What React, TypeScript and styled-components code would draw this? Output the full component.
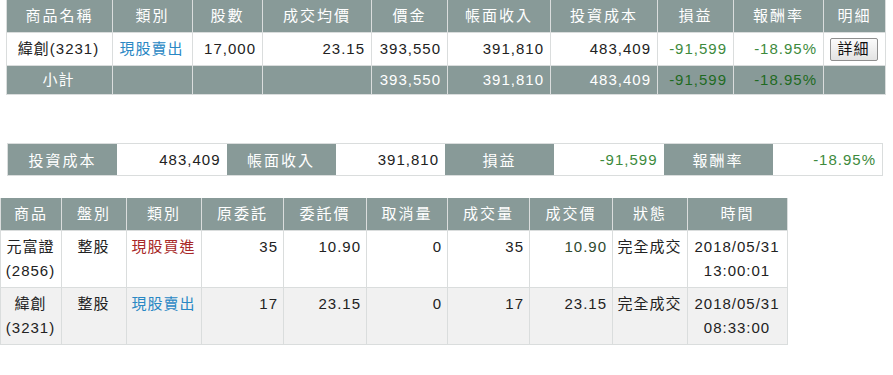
import React from "react";
import styled, { createGlobalStyle } from "styled-components";

const Global = createGlobalStyle`
  html, body { margin: 0; padding: 0; background: #ffffff; }
  body {
    font-family: "Liberation Sans", Arial, "Noto Sans CJK TC", sans-serif;
    font-size: 15px;
    color: #222;
  }
`;

const HEAD_BG = "#889a98";
const LINE = "#dadddd";

const Page = styled.div`
  display: flex;
  flex-direction: column;
  align-items: flex-start;
  width: 893px;
`;

const Table = styled.table<{ $w: number; $ml?: number; $mt?: number }>`
  border-collapse: collapse;
  table-layout: fixed;
  width: ${(p) => p.$w}px;
  margin-left: ${(p) => p.$ml ?? 0}px;
  margin-top: ${(p) => p.$mt ?? 0}px;
  letter-spacing: 1px;
`;

const HeadCell = styled.th<{ $h?: number }>`
  background: ${HEAD_BG};
  color: #fff;
  font-weight: normal;
  height: ${(p) => p.$h ?? 32}px;
  padding: 0;
  text-align: center;
  border: 1px solid ${LINE};
  border-top: none;
  line-height: 18px;
  letter-spacing: 2px;
`;

type Align = "left" | "center" | "right";

const Cell = styled.td<{ $align?: Align; $h?: number; $sub?: boolean; $color?: string }>`
  height: ${(p) => p.$h ?? 32}px;
  padding: 0 6px 0 4px;
  text-align: ${(p) => p.$align ?? "right"};
  border: 1px solid ${LINE};
  background: ${(p) => (p.$sub ? HEAD_BG : "#fff")};
  color: ${(p) => p.$color ?? (p.$sub ? "#fff" : "#222")};
  white-space: nowrap;
  line-height: 18px;
`;

const Row = styled.tr<{ $alt?: boolean }>`
  background: ${(p) => (p.$alt ? "#f1f1f1" : "#fff")};
`;

const OrderCell = styled.td<{ $align?: Align; $color?: string }>`
  height: 48px;
  padding: 4px 5px 4px 4px;
  vertical-align: top;
  text-align: ${(p) => p.$align ?? "right"};
  border: 1px solid ${LINE};
  border-top: none;
  color: ${(p) => p.$color ?? "#222"};
  line-height: 24px;
  white-space: nowrap;
`;

const DetailButton = styled.button`
  width: 48px;
  height: 23px;
  padding: 0;
  font: inherit;
  font-size: 15px;
  letter-spacing: 1px;
  color: #111;
  border: 1px solid #8f8f8f;
  border-radius: 2px;
  background: linear-gradient(#fbfbfb, #e3e3e3);
  display: block;
  margin: 0 auto;
  cursor: pointer;
`;

const Summary = styled.div`
  display: grid;
  grid-template-columns: repeat(8, 1fr);
  width: 876px;
  margin: 48px 0 0 7px;
  border: 1px solid ${LINE};
  box-sizing: border-box;
  letter-spacing: 1px;
`;

const SumLabel = styled.div`
  background: ${HEAD_BG};
  color: #fff;
  height: 31px;
  display: flex;
  align-items: center;
  justify-content: center;
  letter-spacing: 2px;
`;

const SumValue = styled.div<{ $color?: string }>`
  background: #fff;
  color: ${(p) => p.$color ?? "#222"};
  height: 31px;
  display: flex;
  align-items: center;
  justify-content: flex-end;
  padding-right: 6px;
`;

const BLUE = "#2a88c4";
const RED = "#a82828";
const GREEN = "#3d8a3d";
const GREEN_SUB = "#1f6a22";

const topCols = [106, 80, 70, 109, 76, 103, 107, 76, 90, 62];
const topHeads = ["商品名稱", "類別", "股數", "成交均價", "價金", "帳面收入", "投資成本", "損益", "報酬率", "明細"];

const orderCols = [61, 65, 75, 82, 83, 81, 82, 83, 75, 100];
const orderHeads = ["商品", "盤別", "類別", "原委託", "委託價", "取消量", "成交量", "成交價", "狀態", "時間"];

const orders = [
  { name: "元富證", code: "(2856)", kind: "現股買進", color: RED, qty: "35", price: "10.90", cancel: "0", done: "35", dprice: "10.90", dcolor: "#2f4a2f", date: "2018/05/31", time: "13:00:01" },
  { name: "緯創", code: "(3231)", kind: "現股賣出", color: BLUE, qty: "17", price: "23.15", cancel: "0", done: "17", dprice: "23.15", dcolor: "#222", date: "2018/05/31", time: "08:33:00" },
];

export default function App() {
  return (
    <Page>
      <Global />
      <Table $w={879} $ml={6}>
        <colgroup>
          {topCols.map((w, i) => (
            <col key={i} style={{ width: w }} />
          ))}
        </colgroup>
        <thead>
          <tr>
            {topHeads.map((h) => (
              <HeadCell key={h}>{h}</HeadCell>
            ))}
          </tr>
        </thead>
        <tbody>
          <tr>
            <Cell $align="center">緯創(3231)</Cell>
            <Cell $align="center" $color={BLUE}>現股賣出</Cell>
            <Cell>17,000</Cell>
            <Cell>23.15</Cell>
            <Cell>393,550</Cell>
            <Cell>391,810</Cell>
            <Cell>483,409</Cell>
            <Cell $color={GREEN}>-91,599</Cell>
            <Cell $color={GREEN}>-18.95%</Cell>
            <Cell $align="center">
              <DetailButton>詳細</DetailButton>
            </Cell>
          </tr>
          <tr>
            <Cell $sub $h={28} $align="center">小計</Cell>
            <Cell $sub $h={28} />
            <Cell $sub $h={28} />
            <Cell $sub $h={28} />
            <Cell $sub $h={28}>393,550</Cell>
            <Cell $sub $h={28}>391,810</Cell>
            <Cell $sub $h={28}>483,409</Cell>
            <Cell $sub $h={28} $color={GREEN_SUB}>-91,599</Cell>
            <Cell $sub $h={28} $color={GREEN_SUB}>-18.95%</Cell>
            <Cell $sub $h={28} />
          </tr>
        </tbody>
      </Table>

      <Summary>
        <SumLabel>投資成本</SumLabel>
        <SumValue>483,409</SumValue>
        <SumLabel>帳面收入</SumLabel>
        <SumValue>391,810</SumValue>
        <SumLabel>損益</SumLabel>
        <SumValue $color={GREEN}>-91,599</SumValue>
        <SumLabel>報酬率</SumLabel>
        <SumValue $color={GREEN}>-18.95%</SumValue>
      </Summary>

      <Table $w={788} $mt={22}>
        <colgroup>
          {orderCols.map((w, i) => (
            <col key={i} style={{ width: w }} />
          ))}
        </colgroup>
        <thead>
          <tr>
            {orderHeads.map((h) => (
              <HeadCell key={h}>{h}</HeadCell>
            ))}
          </tr>
        </thead>
        <tbody>
          {orders.map((o, i) => (
            <Row key={o.code} $alt={i === 1}>
              <OrderCell $align="center">
                {o.name}
                <br />
                {o.code}
              </OrderCell>
              <OrderCell $align="center">整股</OrderCell>
              <OrderCell $align="center" $color={o.color}>{o.kind}</OrderCell>
              <OrderCell>{o.qty}</OrderCell>
              <OrderCell>{o.price}</OrderCell>
              <OrderCell>{o.cancel}</OrderCell>
              <OrderCell>{o.done}</OrderCell>
              <OrderCell $color={o.dcolor}>{o.dprice}</OrderCell>
              <OrderCell $align="center">完全成交</OrderCell>
              <OrderCell $align="center">
                {o.date}
                <br />
                {o.time}
              </OrderCell>
            </Row>
          ))}
        </tbody>
      </Table>
    </Page>
  );
}
